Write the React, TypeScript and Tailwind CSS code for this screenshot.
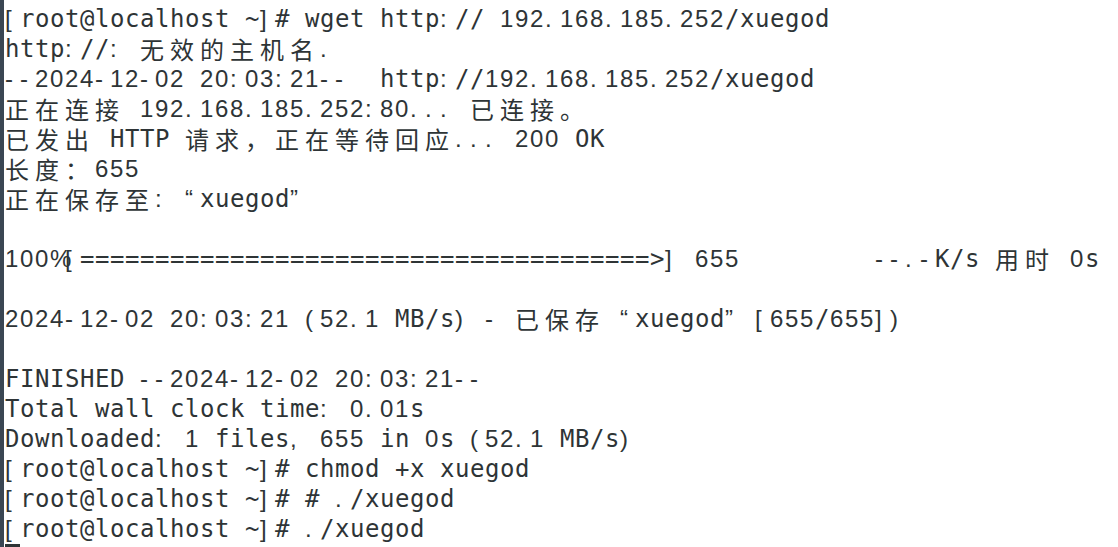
import React from "react";

const LINES: string[] = [
  "[root@localhost ~]# wget http:// 192.168.185.252/xuegod",
  "http://: 无效的主机名.",
  "--2024-12-02 20:03:21--  http://192.168.185.252/xuegod",
  "正在连接 192.168.185.252:80... 已连接。",
  "已发出 HTTP 请求，正在等待回应... 200 OK",
  "长度：655",
  "正在保存至: “xuegod”",
  "",
  "100%[" + "=".repeat(38) + ">] 655" + " ".repeat(9) + "--.-K/s 用时 0s",
  "",
  "2024-12-02 20:03:21 (52.1 MB/s) - 已保存 “xuegod” [655/655])",
  "",
  "FINISHED --2024-12-02 20:03:21--",
  "Total wall clock time: 0.01s",
  "Downloaded: 1 files, 655 in 0s (52.1 MB/s)",
  "[root@localhost ~]# chmod +x xuegod",
  "[root@localhost ~]# # ./xuegod",
  "[root@localhost ~]# ./xuegod",
];

const SANS_RE = /[0-9\[\]().:,\-%“”]/;

function Cell({ ch }: { ch: string }) {
  const code = ch.codePointAt(0) || 0;
  if (code >= 0x2e80) {
    return (
      <span className="inline-block w-[30px] shrink-0 font-['Noto_Sans_CJK_SC',sans-serif] text-[24px] leading-[30px]">
        {ch}
      </span>
    );
  }
  if (SANS_RE.test(ch)) {
    return (
      <span className="inline-block w-[15px] shrink-0 font-['Liberation_Sans',sans-serif] text-[24px] leading-[30px] whitespace-pre">
        {ch}
      </span>
    );
  }
  return (
    <span className="inline-block w-[15px] shrink-0 font-['DejaVu_Sans_Mono',monospace] text-[24px] leading-[30px] whitespace-pre">
      {ch}
    </span>
  );
}

function Line({ text }: { text: string }) {
  const chars = Array.from(text);
  return (
    <div className="flex h-[30px] shrink-0 items-start overflow-visible">
      {chars.map((c, i) => (
        <Cell key={i} ch={c} />
      ))}
    </div>
  );
}

export default function App() {
  return (
    <div className="flex h-[547px] w-[1118px] overflow-hidden bg-white text-[#2e3436]">
      <div className="w-[4px] shrink-0 bg-[#3a4653]" />
      <div className="flex flex-1 flex-col pl-[1px] pt-[4px]">
        {LINES.map((l, i) => (
          <Line key={i} text={l} />
        ))}
        <div className="flex h-[30px] shrink-0">
          <div className="h-[30px] w-[15px] bg-[#2e3436]" />
        </div>
      </div>
    </div>
  );
}
